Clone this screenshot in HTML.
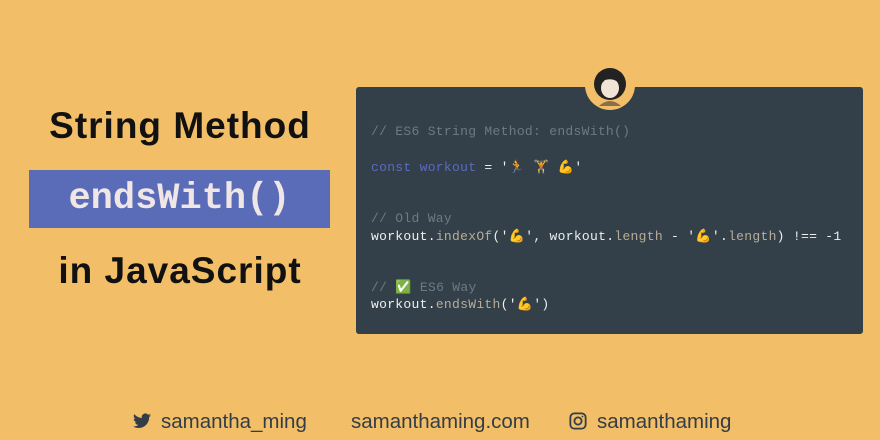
<!DOCTYPE html>
<html><head><style>
body{margin:0;width:880px;height:440px;background:#f2be67;position:relative;overflow:hidden;font-family:"Liberation Sans",sans-serif}
.t{position:absolute;left:0;width:360px;text-align:center;font-weight:bold;font-size:37px;letter-spacing:1px;color:#111}
.box{position:absolute;left:29px;top:170px;width:301px;height:58px;background:#5a6bb7;color:#f0e6e6;font-family:"Liberation Mono",monospace;font-weight:bold;font-size:37px;line-height:58px;text-align:center}
.code{position:absolute;left:356px;top:87px;width:507px;height:247px;background:#334049;border-radius:3px}
.l{position:absolute;left:15px;font-family:"Liberation Mono",monospace;font-size:13px;color:#eee;white-space:pre;letter-spacing:0.3px}
.c{color:#6c7a86}.k{color:#5b6bbf}.f{color:#b8ad96}
.av{position:absolute;left:585px;top:60px;width:50px;height:50px;border-radius:50%;background:#f2be67}
.foot{position:absolute;top:410px;font-size:20.5px;color:#333d47}
</style></head><body>
<div class="t" style="top:105px">String Method</div>
<div class="box">endsWith()</div>
<div class="t" style="top:250px">in JavaScript</div>
<div class="code">
<div class="l c" style="top:37px">// ES6 String Method: endsWith()</div>
<div class="l" style="top:73px"><span class="k">const workout</span> = '🏃 🏋 💪'</div>
<div class="l c" style="top:124px">// Old Way</div>
<div class="l" style="top:142px">workout.<span class="f">indexOf</span>('💪', workout.<span class="f">length</span> - '💪'.<span class="f">length</span>) !== -1</div>
<div class="l c" style="top:193px">// ✅ ES6 Way</div>
<div class="l" style="top:210px">workout.<span class="f">endsWith</span>('💪')</div>
</div>
<div class="av"><svg width="50" height="50" viewBox="0 0 50 50"><circle cx="25" cy="24" r="16" fill="#222"/><ellipse cx="25" cy="28" rx="9" ry="10" fill="#f1e3d6"/><path d="M13 20 Q25 6 37 20 L37 26 Q30 17 20 20 L13 27Z" fill="#222"/><path d="M14 46 Q25 36 36 46Z" fill="#8a6d4b"/></svg></div>
<div class="foot" style="left:133px"><svg width="18" height="16" viewBox="0 0 24 20" style="vertical-align:-1px;margin-right:10px"><path fill="#333d47" d="M24 2.4a10 10 0 0 1-2.8.8A5 5 0 0 0 23.3.4a10 10 0 0 1-3.1 1.2A4.9 4.9 0 0 0 11.8 6 14 14 0 0 1 1.7.9a4.9 4.9 0 0 0 1.5 6.6A4.9 4.9 0 0 1 1 6.9a4.9 4.9 0 0 0 3.9 4.8 5 5 0 0 1-2.2.1 4.9 4.9 0 0 0 4.6 3.4A9.9 9.9 0 0 1 0 17.2 14 14 0 0 0 7.5 19.4c9 0 14-7.5 14-14v-.6A10 10 0 0 0 24 2.4z"/></svg>samantha_ming</div>
<div class="foot" style="left:351px">samanthaming.com</div>
<div class="foot" style="left:569px"><svg width="18" height="18" viewBox="0 0 20 20" style="vertical-align:-2px;margin-right:10px"><rect x="1.5" y="1.5" width="17" height="17" rx="4.5" fill="none" stroke="#333d47" stroke-width="2"/><circle cx="10" cy="10" r="4" fill="none" stroke="#333d47" stroke-width="2"/><circle cx="15" cy="5" r="1" fill="#333d47"/></svg>samanthaming</div>
</body></html>
